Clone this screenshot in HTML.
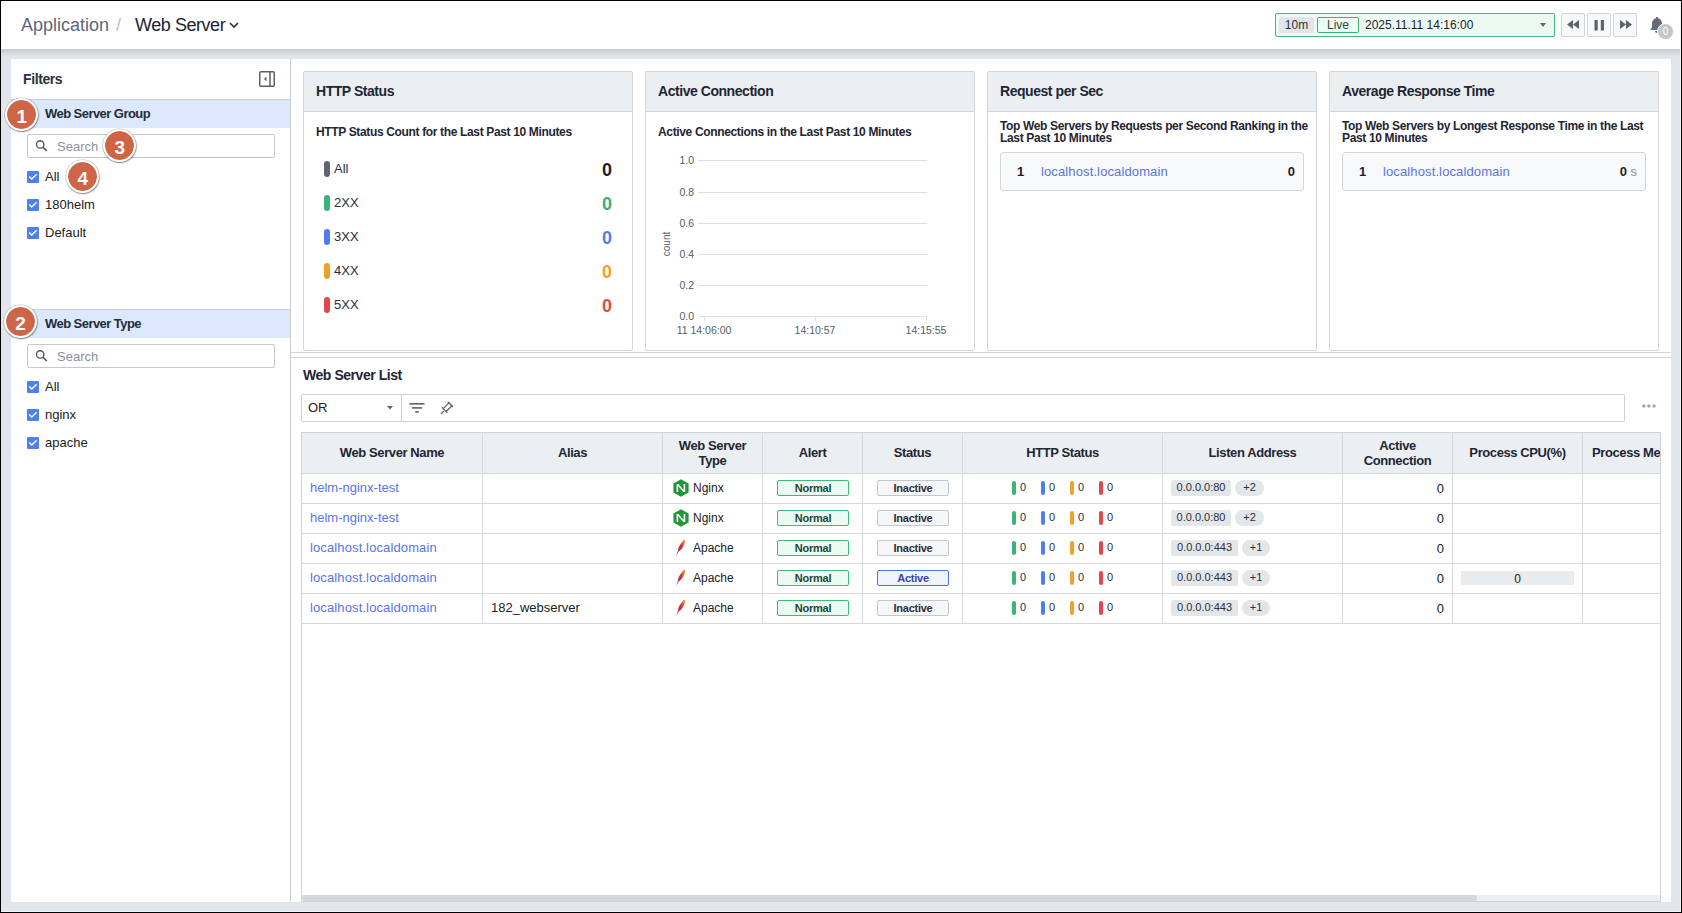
<!DOCTYPE html>
<html><head><meta charset="utf-8">
<style>
*{box-sizing:border-box;margin:0;padding:0}
html,body{width:1682px;height:913px;overflow:hidden;background:#e2e6ea;font-family:"Liberation Sans",sans-serif;color:#1f2633}
.a{position:absolute}
.t{position:absolute;white-space:nowrap;line-height:1}
#frame{position:absolute;left:0;top:0;width:1682px;height:913px;border:1px solid #000;pointer-events:none;z-index:50}
#hdr{position:absolute;left:1px;top:1px;width:1680px;height:48px;background:#fff}
#shadow{position:absolute;left:1px;top:49px;width:1680px;height:10px;background:linear-gradient(#c5cad0,#e2e6ea 75%)}
#fp{position:absolute;left:11px;top:59px;width:280px;height:843px;background:#fff;border-right:1px solid #c9cdd2}
#mp{position:absolute;left:291px;top:59px;width:1380px;height:843px;background:#fff}
.btn{position:absolute;top:12px;width:24px;height:24px;border:1px solid #cfd3d8;border-radius:2px;background:#f7f8fa}
.ghdr{position:absolute;left:0;width:279px;height:29px;background:#dce9fc;border-top:1px solid #cdd1d6}
.gtxt{position:absolute;left:34px;top:7px;font-size:13px;font-weight:bold;color:#222b38;white-space:nowrap;line-height:1;letter-spacing:-0.55px}
.srch{position:absolute;left:16px;width:248px;height:24px;border:1px solid #c4c9cf;border-radius:2px;background:#fff}
.srch span{position:absolute;left:29px;top:5px;font-size:13px;color:#8a929c;line-height:1}
.cb{position:absolute;left:16px;width:12px;height:12px;background:#4e80f0;border-radius:1px}
.cbl{position:absolute;left:34px;font-size:13px;color:#222;line-height:1;white-space:nowrap}
.badge{position:absolute;width:33px;height:33px;border-radius:50%;background:#cf6547;background-clip:padding-box;border:2px solid #fff;box-shadow:0 0 0 0.6px rgba(60,60,60,.3),0.5px 1px 1.5px rgba(0,0,0,.45);z-index:20}
.badge i{position:absolute;left:0;width:29px;top:7px;text-align:center;font-style:normal;font-size:19px;font-weight:bold;color:#fff;line-height:1}

.card{position:absolute;top:71px;width:330px;height:280px;border:1px solid #d3d7dc;border-radius:2px;background:#fff;overflow:hidden}
.chd{position:absolute;left:0;top:0;width:328px;height:40px;background:#eceff2;border-bottom:1px solid #d3d7dc}
.ctl{position:absolute;left:12px;top:12px;font-size:14px;font-weight:bold;color:#1f2633;white-space:nowrap;line-height:1;letter-spacing:-0.45px}
.csub{position:absolute;left:12px;font-size:12px;font-weight:bold;color:#1f2633;line-height:12px;letter-spacing:-0.35px}
.lg{position:absolute;left:20px;width:6px;height:16px;border-radius:3px}
.lgt{position:absolute;left:30px;font-size:13px;color:#2a2f38;line-height:1}
.lgv{position:absolute;right:20px;font-size:18px;font-weight:bold;line-height:1}
.yl{position:absolute;width:30px;text-align:right;font-size:10.5px;color:#555c66;line-height:1}
.gl{position:absolute;left:698px;width:229px;height:1px;background:#dcdfe3}
.xl{position:absolute;width:80px;text-align:center;font-size:10.5px;color:#555c66;line-height:1}
.rk{position:absolute;left:12px;top:80px;width:304px;height:39px;border:1px solid #d3d7dc;border-radius:3px;background:#f8f9fa}

.th{position:absolute;top:433px;height:40px;background:#eceff2;font-size:13px;font-weight:bold;color:#1f2633;text-align:center;line-height:15px;white-space:nowrap}
.vl{position:absolute;top:432px;width:1px;height:191px;background:#d5d9de}
.hl{position:absolute;left:302px;width:1358px;height:1px;background:#d5d9de}
.cell{position:absolute;font-size:13px;line-height:1;white-space:nowrap;color:#222}
.lnk{color:#5a73e6;letter-spacing:0.12px}
.al{position:absolute;left:777px;width:72px;height:16px;border:1px solid #3dba78;border-radius:2px;background:#ebfaf2;font-size:11px;font-weight:bold;color:#1e4637;text-align:center;line-height:14px;letter-spacing:-0.2px}
.st{position:absolute;left:877px;width:72px;height:16px;border:1px solid #c3c8ce;border-radius:2px;background:#f5f6f8;font-size:11px;font-weight:bold;color:#2a2f38;text-align:center;line-height:14px;letter-spacing:-0.25px}
.st.act{border-color:#4d72f0;background:#eef3ff;color:#3a44a6}
.hb{position:absolute;width:4px;height:14px;border-radius:2px}
.hv{position:absolute;font-size:11px;color:#2a2f38;line-height:1}
.chip{position:absolute;left:1171px;height:16px;border-radius:2px;background:#e4e7ea;font-size:11px;color:#2a2f38;text-align:center;line-height:15px}
.pill{position:absolute;height:16px;border-radius:8px;background:#e4e7ea;font-size:11px;color:#2a2f38;text-align:center;line-height:15px}
</style></head><body>
<div id="frame"></div>
<div class="a" style="left:1680px;top:1px;width:1px;height:911px;background:#f3f6f8;z-index:49"></div>
<div class="a" style="left:1px;top:911px;width:1680px;height:1px;background:#f3f6f8;z-index:49"></div>
<div id="hdr">
  <div class="t" style="left:20px;top:15px;font-size:18px;color:#5c6878">Application</div>
  <div class="t" style="left:115px;top:15px;font-size:18px;color:#b8bec6">/</div>
  <div class="t" style="left:134px;top:15px;font-size:18px;color:#1c2330;letter-spacing:-0.45px">Web Server</div>
  <svg class="a" style="left:227px;top:19px" width="12" height="10" viewBox="0 0 12 10"><path d="M2 3 L6 7 L10 3" fill="none" stroke="#2a3140" stroke-width="1.6"/></svg>

  <div class="a" style="left:1274px;top:12px;width:280px;height:24px;border:1px solid #49b983;border-radius:2px;background:#edfaf3"></div>
  <div class="a" style="left:1278px;top:16px;width:35px;height:16px;border-radius:2px;background:#e1e4e8"></div>
  <div class="t" style="left:1278px;top:18px;width:35px;text-align:center;font-size:12px;color:#333">10m</div>
  <div class="a" style="left:1316px;top:16px;width:42px;height:16px;border:1px solid #39b275;border-radius:2px;background:#effbf5"></div>
  <div class="t" style="left:1316px;top:18px;width:42px;text-align:center;font-size:12px;color:#1f4f3a">Live</div>
  <div class="t" style="left:1364px;top:18px;font-size:12px;color:#222">2025.11.11 14:16:00</div>
  <svg class="a" style="left:1538px;top:21px" width="8" height="6"><path d="M1 1 L7 1 L4 5 Z" fill="#5f6670"/></svg>

  <div class="btn" style="left:1560px"><svg class="a" style="left:5px;top:6px" width="13" height="10"><path d="M0 4.5 L6 0 L6 9 Z M6 4.5 L12 0 L12 9 Z" fill="#5c636d"/></svg></div>
  <div class="btn" style="left:1586px"><svg class="a" style="left:6px;top:6px" width="11" height="11"><rect x="0.5" y="0" width="3.2" height="10.5" fill="#5c636d"/><rect x="6.8" y="0" width="3.2" height="10.5" fill="#5c636d"/></svg></div>
  <div class="btn" style="left:1612px"><svg class="a" style="left:6px;top:6px" width="13" height="10"><path d="M0 0 L6 4.5 L0 9 Z M6 0 L12 4.5 L6 9 Z" fill="#5c636d"/></svg></div>
  <svg class="a" style="left:1648px;top:15px" width="16" height="18" viewBox="0 0 16 18"><path d="M8 1 C8.8 1 9.2 1.5 9.2 2.2 C11.8 2.9 13 5 13 7.8 L13 11.5 L15 14 L1 14 L3 11.5 L3 7.8 C3 5 4.2 2.9 6.8 2.2 C6.8 1.5 7.2 1 8 1 Z M6 15 L10 15 C10 16.2 9.1 17 8 17 C6.9 17 6 16.2 6 15 Z" fill="#656b75"/></svg>
  <div class="a" style="left:1656px;top:22px;width:17px;height:17px;border-radius:50%;background:#c2c6cc;border:1px solid #fff"></div>
  <div class="t" style="left:1656px;top:26px;width:17px;text-align:center;font-size:10px;color:#fff">0</div>
</div>
<div id="shadow"></div>

<div id="fp">
  <div class="t" style="left:12px;top:13px;font-size:14px;font-weight:bold;color:#2a3240;letter-spacing:-0.4px">Filters</div>
  <svg class="a" style="left:248px;top:12px" width="16" height="16" viewBox="0 0 16 16"><rect x="0.75" y="0.75" width="14.5" height="14.5" rx="1" fill="none" stroke="#5a616b" stroke-width="1.5"/><line x1="11" y1="1" x2="11" y2="15" stroke="#5a616b" stroke-width="1.5"/><path d="M7.5 5.5 L5 8 L7.5 10.5 Z" fill="#5a616b"/></svg>

  <div class="ghdr" style="top:40px"><div class="gtxt">Web Server Group</div></div>
  <div class="srch" style="top:75px"><svg class="a" style="left:7px;top:5px" width="14" height="14" viewBox="0 0 14 14"><circle cx="5.2" cy="4.4" r="3.7" fill="none" stroke="#50575f" stroke-width="1.35"/><line x1="7.9" y1="7.1" x2="11.8" y2="11" stroke="#50575f" stroke-width="1.6"/></svg><span>Search</span></div>
  <div class="cb" style="top:112px"><svg width="12" height="12" style="display:block"><path d="M2.3 5.5 L4.7 8 L9.7 3.3" fill="none" stroke="#fff" stroke-width="1.4"/></svg></div>
  <div class="cbl" style="top:111px">All</div>
  <div class="cb" style="top:140px"><svg width="12" height="12" style="display:block"><path d="M2.3 5.5 L4.7 8 L9.7 3.3" fill="none" stroke="#fff" stroke-width="1.4"/></svg></div>
  <div class="cbl" style="top:139px">180helm</div>
  <div class="cb" style="top:168px"><svg width="12" height="12" style="display:block"><path d="M2.3 5.5 L4.7 8 L9.7 3.3" fill="none" stroke="#fff" stroke-width="1.4"/></svg></div>
  <div class="cbl" style="top:167px">Default</div>

  <div class="ghdr" style="top:250px"><div class="gtxt">Web Server Type</div></div>
  <div class="srch" style="top:285px"><svg class="a" style="left:7px;top:5px" width="14" height="14" viewBox="0 0 14 14"><circle cx="5.2" cy="4.4" r="3.7" fill="none" stroke="#50575f" stroke-width="1.35"/><line x1="7.9" y1="7.1" x2="11.8" y2="11" stroke="#50575f" stroke-width="1.6"/></svg><span>Search</span></div>
  <div class="cb" style="top:322px"><svg width="12" height="12" style="display:block"><path d="M2.3 5.5 L4.7 8 L9.7 3.3" fill="none" stroke="#fff" stroke-width="1.4"/></svg></div>
  <div class="cbl" style="top:321px">All</div>
  <div class="cb" style="top:350px"><svg width="12" height="12" style="display:block"><path d="M2.3 5.5 L4.7 8 L9.7 3.3" fill="none" stroke="#fff" stroke-width="1.4"/></svg></div>
  <div class="cbl" style="top:349px">nginx</div>
  <div class="cb" style="top:378px"><svg width="12" height="12" style="display:block"><path d="M2.3 5.5 L4.7 8 L9.7 3.3" fill="none" stroke="#fff" stroke-width="1.4"/></svg></div>
  <div class="cbl" style="top:377px">apache</div>
</div>

<div class="badge" style="left:5.3px;top:98.2px"><i>1</i></div>
<div class="badge" style="left:4.15px;top:305.2px"><i>2</i></div>
<div class="badge" style="left:103.2px;top:129.3px"><i>3</i></div>
<div class="badge" style="left:66.3px;top:160.1px"><i>4</i></div>

<div id="mp"></div>

<div class="card" style="left:303px">
  <div class="chd"><div class="ctl">HTTP Status</div></div>
  <div class="csub" style="top:54px">HTTP Status Count for the Last Past 10 Minutes</div>
  <div class="lg" style="top:89px;background:#5f6570"></div><div class="lgt" style="top:90px">All</div><div class="lgv" style="top:89px;color:#1b1f27">0</div>
  <div class="lg" style="top:123px;background:#3ab47a"></div><div class="lgt" style="top:124px">2XX</div><div class="lgv" style="top:123px;color:#35b07a">0</div>
  <div class="lg" style="top:157px;background:#4d7ef0"></div><div class="lgt" style="top:158px">3XX</div><div class="lgv" style="top:157px;color:#4d7ef0">0</div>
  <div class="lg" style="top:191px;background:#eea22a"></div><div class="lgt" style="top:192px">4XX</div><div class="lgv" style="top:191px;color:#eea22a">0</div>
  <div class="lg" style="top:225px;background:#e4474a"></div><div class="lgt" style="top:226px">5XX</div><div class="lgv" style="top:225px;color:#e4474a">0</div>
</div>
<div class="card" style="left:645px">
  <div class="chd"><div class="ctl">Active Connection</div></div>
  <div class="csub" style="top:54px">Active Connections in the Last Past 10 Minutes</div>
</div>
<div class="gl" style="top:160px"></div>
<div class="gl" style="top:192px"></div>
<div class="gl" style="top:223px"></div>
<div class="gl" style="top:254px"></div>
<div class="gl" style="top:285px"></div>
<div class="gl" style="top:316px"></div>
<div class="yl" style="left:664px;top:155px">1.0</div>
<div class="yl" style="left:664px;top:187px">0.8</div>
<div class="yl" style="left:664px;top:218px">0.6</div>
<div class="yl" style="left:664px;top:249px">0.4</div>
<div class="yl" style="left:664px;top:280px">0.2</div>
<div class="yl" style="left:664px;top:311px">0.0</div>
<div class="a" style="left:704px;top:316px;width:1px;height:5px;background:#dcdfe3"></div>
<div class="a" style="left:815px;top:316px;width:1px;height:5px;background:#dcdfe3"></div>
<div class="a" style="left:926px;top:316px;width:1px;height:5px;background:#dcdfe3"></div>
<div class="xl" style="left:664px;top:325px">11 14:06:00</div>
<div class="xl" style="left:775px;top:325px">14:10:57</div>
<div class="xl" style="left:886px;top:325px">14:15:55</div>
<div class="t" style="left:647px;top:239px;width:40px;text-align:center;font-size:10px;color:#5d6470;transform:rotate(-90deg)">count</div>

<div class="card" style="left:987px">
  <div class="chd"><div class="ctl">Request per Sec</div></div>
  <div class="csub" style="top:48px;width:310px">Top Web Servers by Requests per Second Ranking in the Last Past 10 Minutes</div>
  <div class="rk"><div class="t" style="left:16px;top:12px;font-size:13px;font-weight:bold;color:#222">1</div><div class="t" style="left:40px;top:12px;font-size:13px;color:#5a73e6;letter-spacing:0.12px">localhost.localdomain</div><div class="t" style="right:8px;top:12px;font-size:13px;font-weight:bold;color:#222">0</div></div>
</div>
<div class="card" style="left:1329px">
  <div class="chd"><div class="ctl">Average Response Time</div></div>
  <div class="csub" style="top:48px;width:310px">Top Web Servers by Longest Response Time in the Last Past 10 Minutes</div>
  <div class="rk"><div class="t" style="left:16px;top:12px;font-size:13px;font-weight:bold;color:#222">1</div><div class="t" style="left:40px;top:12px;font-size:13px;color:#5a73e6;letter-spacing:0.12px">localhost.localdomain</div><div class="t" style="right:8px;top:12px;font-size:13px;color:#222"><b>0</b> <span style="color:#8a9099">s</span></div></div>
</div>

<div class="a" style="left:291px;top:352px;width:1380px;height:1px;background:#d3d7dc"></div>
<div class="a" style="left:291px;top:357px;width:1380px;height:1px;background:#d3d7dc"></div>
<div class="t" style="left:303px;top:368px;font-size:14px;font-weight:bold;color:#1f2633;letter-spacing:-0.45px">Web Server List</div>
<div class="a" style="left:301px;top:394px;width:1324px;height:28px;border:1px solid #cdd1d6;border-radius:2px;background:#fff"></div>
<div class="a" style="left:401px;top:395px;width:1px;height:26px;background:#cdd1d6"></div>
<div class="t" style="left:308px;top:401px;font-size:13px;color:#222">OR</div>
<svg class="a" style="left:386px;top:405px" width="8" height="6"><path d="M1 1 L7 1 L4 4.5 Z" fill="#5f6670"/></svg>
<svg class="a" style="left:408px;top:401px" width="18" height="13"><rect x="1.5" y="2" width="15" height="1.6" fill="#5c636d"/><rect x="4" y="6.1" width="10" height="1.6" fill="#5c636d"/><rect x="7.2" y="10.1" width="3.6" height="1.6" fill="#5c636d"/></svg>
<svg class="a" style="left:438px;top:398px" width="18" height="18" viewBox="0 0 18 18"><g fill="none" stroke="#5c636d" stroke-width="1.3" stroke-linecap="round" stroke-linejoin="round"><path d="M3.3 15.5 L5.7 13.1"/><path d="M4.3 9.6 L9 14.4"/><path d="M10.3 4.2 L14.6 8.5"/><path d="M5.2 10.6 L11 4.9 M8.2 13.5 L14 7.8"/></g></svg>
<svg class="a" style="left:1640px;top:403px" width="18" height="6"><circle cx="3.9" cy="3" r="1.8" fill="#a3a9b2"/><circle cx="8.9" cy="3" r="1.8" fill="#a3a9b2"/><circle cx="14" cy="3" r="1.8" fill="#a3a9b2"/></svg>
<div class="a" style="left:301px;top:432px;width:1360px;height:470px;border:1px solid #cfd3d8;background:#fff"></div>
<div class="a" style="left:302px;top:433px;width:1358px;height:40px;background:#eceff2"></div>
<div class="t" style="left:302px;top:446px;width:180px;text-align:center;font-size:13px;font-weight:bold;color:#1f2633;letter-spacing:-0.4px">Web Server Name</div>
<div class="t" style="left:483px;top:446px;width:179px;text-align:center;font-size:13px;font-weight:bold;color:#1f2633;letter-spacing:-0.4px">Alias</div>
<div class="a" style="left:663px;top:438px;width:99px;text-align:center;font-size:13px;font-weight:bold;color:#1f2633;line-height:15px;letter-spacing:-0.4px">Web Server<br>Type</div>
<div class="t" style="left:763px;top:446px;width:99px;text-align:center;font-size:13px;font-weight:bold;color:#1f2633;letter-spacing:-0.4px">Alert</div>
<div class="t" style="left:863px;top:446px;width:99px;text-align:center;font-size:13px;font-weight:bold;color:#1f2633;letter-spacing:-0.4px">Status</div>
<div class="t" style="left:963px;top:446px;width:199px;text-align:center;font-size:13px;font-weight:bold;color:#1f2633;letter-spacing:-0.4px">HTTP Status</div>
<div class="t" style="left:1163px;top:446px;width:179px;text-align:center;font-size:13px;font-weight:bold;color:#1f2633;letter-spacing:-0.4px">Listen Address</div>
<div class="a" style="left:1343px;top:438px;width:109px;text-align:center;font-size:13px;font-weight:bold;color:#1f2633;line-height:15px;letter-spacing:-0.4px">Active<br>Connection</div>
<div class="t" style="left:1453px;top:446px;width:129px;text-align:center;font-size:13px;font-weight:bold;color:#1f2633;letter-spacing:-0.4px">Process CPU(%)</div>
<div class="t" style="left:1592px;top:446px;font-size:13px;font-weight:bold;color:#1f2633;width:1000px;clip-path:inset(0 0 0 0)"></div>
<div class="a" style="left:1583px;top:433px;width:77px;height:40px;overflow:hidden"><div class="t" style="left:9px;top:13px;font-size:13px;font-weight:bold;color:#1f2633;letter-spacing:-0.4px">Process Memory(%)</div></div>
<div class="vl" style="left:482px"></div>
<div class="vl" style="left:662px"></div>
<div class="vl" style="left:762px"></div>
<div class="vl" style="left:862px"></div>
<div class="vl" style="left:962px"></div>
<div class="vl" style="left:1162px"></div>
<div class="vl" style="left:1342px"></div>
<div class="vl" style="left:1452px"></div>
<div class="vl" style="left:1582px"></div>
<div class="hl" style="top:473px"></div>
<div class="hl" style="top:503px"></div>
<div class="hl" style="top:533px"></div>
<div class="hl" style="top:563px"></div>
<div class="hl" style="top:593px"></div>
<div class="hl" style="top:623px"></div>
<div class="cell lnk" style="left:310px;top:481px;letter-spacing:0">helm-nginx-test</div>
<svg class="a" style="left:673px;top:479px" width="16" height="18" viewBox="0 0 16 18"><path d="M8 0.2 L15.6 4.6 L15.6 13.4 L8 17.8 L0.4 13.4 L0.4 4.6 Z" fill="#22963b"/><path d="M3.6 5 H5.4 L10.6 11 V5 H12.2 V13 H10.4 L5.2 7 V13 H3.6 Z" fill="#fff"/></svg>
<div class="cell" style="left:693px;top:482px;font-size:12px">Nginx</div>
<div class="al" style="top:480px">Normal</div>
<div class="st" style="top:480px">Inactive</div>
<div class="hb" style="left:1012px;top:481px;background:#3ab47a"></div>
<div class="hv" style="left:1020px;top:482px">0</div>
<div class="hb" style="left:1041px;top:481px;background:#4d7ef0"></div>
<div class="hv" style="left:1049px;top:482px">0</div>
<div class="hb" style="left:1070px;top:481px;background:#eea22a"></div>
<div class="hv" style="left:1078px;top:482px">0</div>
<div class="hb" style="left:1099px;top:481px;background:#e4474a"></div>
<div class="hv" style="left:1107px;top:482px">0</div>
<div class="chip" style="top:480px;width:60px">0.0.0.0:80</div>
<div class="pill" style="left:1235px;top:480px;width:29px">+2</div>
<div class="cell" style="left:1400px;width:44px;text-align:right;top:482px">0</div>
<div class="cell lnk" style="left:310px;top:511px;letter-spacing:0">helm-nginx-test</div>
<svg class="a" style="left:673px;top:509px" width="16" height="18" viewBox="0 0 16 18"><path d="M8 0.2 L15.6 4.6 L15.6 13.4 L8 17.8 L0.4 13.4 L0.4 4.6 Z" fill="#22963b"/><path d="M3.6 5 H5.4 L10.6 11 V5 H12.2 V13 H10.4 L5.2 7 V13 H3.6 Z" fill="#fff"/></svg>
<div class="cell" style="left:693px;top:512px;font-size:12px">Nginx</div>
<div class="al" style="top:510px">Normal</div>
<div class="st" style="top:510px">Inactive</div>
<div class="hb" style="left:1012px;top:511px;background:#3ab47a"></div>
<div class="hv" style="left:1020px;top:512px">0</div>
<div class="hb" style="left:1041px;top:511px;background:#4d7ef0"></div>
<div class="hv" style="left:1049px;top:512px">0</div>
<div class="hb" style="left:1070px;top:511px;background:#eea22a"></div>
<div class="hv" style="left:1078px;top:512px">0</div>
<div class="hb" style="left:1099px;top:511px;background:#e4474a"></div>
<div class="hv" style="left:1107px;top:512px">0</div>
<div class="chip" style="top:510px;width:60px">0.0.0.0:80</div>
<div class="pill" style="left:1235px;top:510px;width:29px">+2</div>
<div class="cell" style="left:1400px;width:44px;text-align:right;top:512px">0</div>
<div class="cell lnk" style="left:310px;top:541px">localhost.localdomain</div>
<svg class="a" style="left:675px;top:539px" width="12" height="18" viewBox="0 0 12 18"><defs><linearGradient id="fg2" x1="1" y1="0" x2="0" y2="1"><stop offset="0" stop-color="#f6a533"/><stop offset="0.45" stop-color="#d22c3a"/><stop offset="1" stop-color="#8a3a8f"/></linearGradient></defs><path d="M9.8 0.8 C10.6 1.6 10 4.4 8.4 7.2 C7 9.6 5.2 11.6 3.6 12.4 C2.6 14.2 1.8 15.8 1.2 17.2 C1.6 15.2 2.2 13.4 3 11.6 C3 9.4 4.4 6.4 6.2 4 C7.6 2.2 9 0.2 9.8 0.8 Z" fill="url(#fg2)"/></svg>
<div class="cell" style="left:693px;top:542px;font-size:12px">Apache</div>
<div class="al" style="top:540px">Normal</div>
<div class="st" style="top:540px">Inactive</div>
<div class="hb" style="left:1012px;top:541px;background:#3ab47a"></div>
<div class="hv" style="left:1020px;top:542px">0</div>
<div class="hb" style="left:1041px;top:541px;background:#4d7ef0"></div>
<div class="hv" style="left:1049px;top:542px">0</div>
<div class="hb" style="left:1070px;top:541px;background:#eea22a"></div>
<div class="hv" style="left:1078px;top:542px">0</div>
<div class="hb" style="left:1099px;top:541px;background:#e4474a"></div>
<div class="hv" style="left:1107px;top:542px">0</div>
<div class="chip" style="top:540px;width:67px">0.0.0.0:443</div>
<div class="pill" style="left:1242px;top:540px;width:28px">+1</div>
<div class="cell" style="left:1400px;width:44px;text-align:right;top:542px">0</div>
<div class="cell lnk" style="left:310px;top:571px">localhost.localdomain</div>
<svg class="a" style="left:675px;top:569px" width="12" height="18" viewBox="0 0 12 18"><defs><linearGradient id="fg3" x1="1" y1="0" x2="0" y2="1"><stop offset="0" stop-color="#f6a533"/><stop offset="0.45" stop-color="#d22c3a"/><stop offset="1" stop-color="#8a3a8f"/></linearGradient></defs><path d="M9.8 0.8 C10.6 1.6 10 4.4 8.4 7.2 C7 9.6 5.2 11.6 3.6 12.4 C2.6 14.2 1.8 15.8 1.2 17.2 C1.6 15.2 2.2 13.4 3 11.6 C3 9.4 4.4 6.4 6.2 4 C7.6 2.2 9 0.2 9.8 0.8 Z" fill="url(#fg3)"/></svg>
<div class="cell" style="left:693px;top:572px;font-size:12px">Apache</div>
<div class="al" style="top:570px">Normal</div>
<div class="st act" style="top:570px">Active</div>
<div class="hb" style="left:1012px;top:571px;background:#3ab47a"></div>
<div class="hv" style="left:1020px;top:572px">0</div>
<div class="hb" style="left:1041px;top:571px;background:#4d7ef0"></div>
<div class="hv" style="left:1049px;top:572px">0</div>
<div class="hb" style="left:1070px;top:571px;background:#eea22a"></div>
<div class="hv" style="left:1078px;top:572px">0</div>
<div class="hb" style="left:1099px;top:571px;background:#e4474a"></div>
<div class="hv" style="left:1107px;top:572px">0</div>
<div class="chip" style="top:570px;width:67px">0.0.0.0:443</div>
<div class="pill" style="left:1242px;top:570px;width:28px">+1</div>
<div class="cell" style="left:1400px;width:44px;text-align:right;top:572px">0</div>
<div class="a" style="left:1461px;top:571px;width:113px;height:14px;background:#e9ecef;border-radius:1px"></div>
<div class="cell" style="left:1461px;width:113px;text-align:center;top:573px;font-size:12px">0</div>
<div class="cell lnk" style="left:310px;top:601px">localhost.localdomain</div>
<div class="cell" style="left:491px;top:601px">182_webserver</div>
<svg class="a" style="left:675px;top:599px" width="12" height="18" viewBox="0 0 12 18"><defs><linearGradient id="fg4" x1="1" y1="0" x2="0" y2="1"><stop offset="0" stop-color="#f6a533"/><stop offset="0.45" stop-color="#d22c3a"/><stop offset="1" stop-color="#8a3a8f"/></linearGradient></defs><path d="M9.8 0.8 C10.6 1.6 10 4.4 8.4 7.2 C7 9.6 5.2 11.6 3.6 12.4 C2.6 14.2 1.8 15.8 1.2 17.2 C1.6 15.2 2.2 13.4 3 11.6 C3 9.4 4.4 6.4 6.2 4 C7.6 2.2 9 0.2 9.8 0.8 Z" fill="url(#fg4)"/></svg>
<div class="cell" style="left:693px;top:602px;font-size:12px">Apache</div>
<div class="al" style="top:600px">Normal</div>
<div class="st" style="top:600px">Inactive</div>
<div class="hb" style="left:1012px;top:601px;background:#3ab47a"></div>
<div class="hv" style="left:1020px;top:602px">0</div>
<div class="hb" style="left:1041px;top:601px;background:#4d7ef0"></div>
<div class="hv" style="left:1049px;top:602px">0</div>
<div class="hb" style="left:1070px;top:601px;background:#eea22a"></div>
<div class="hv" style="left:1078px;top:602px">0</div>
<div class="hb" style="left:1099px;top:601px;background:#e4474a"></div>
<div class="hv" style="left:1107px;top:602px">0</div>
<div class="chip" style="top:600px;width:67px">0.0.0.0:443</div>
<div class="pill" style="left:1242px;top:600px;width:28px">+1</div>
<div class="cell" style="left:1400px;width:44px;text-align:right;top:602px">0</div>
<div class="a" style="left:302px;top:895px;width:1358px;height:6px;background:#eceff2"></div>
<div class="a" style="left:302px;top:895px;width:1175px;height:6px;background:#d4d7db;border-radius:3px"></div>

</body></html>
